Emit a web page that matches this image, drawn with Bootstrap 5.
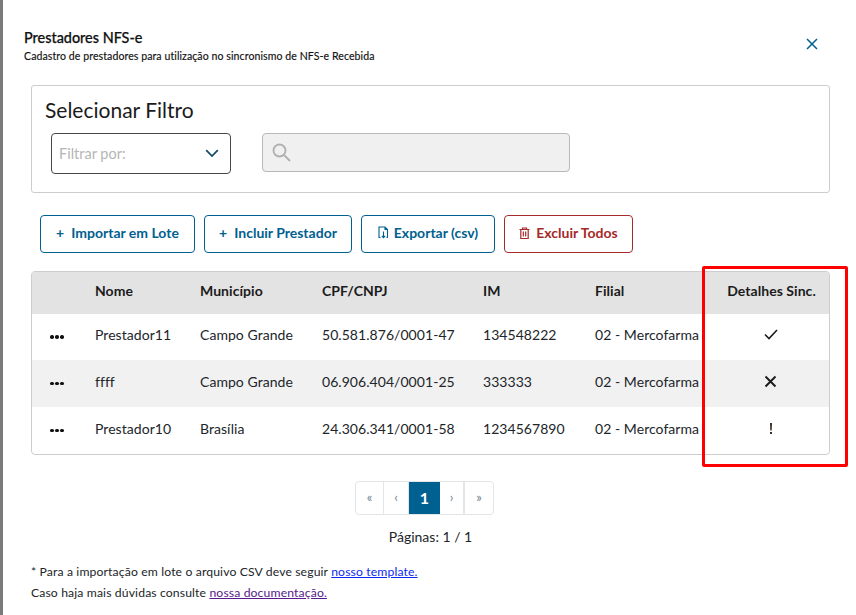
<!DOCTYPE html>
<html lang="pt-BR">
<head>
<meta charset="utf-8">
<title>Prestadores NFS-e</title>
<link href="https://cdn.jsdelivr.net/npm/bootstrap@5.3.0/dist/css/bootstrap.min.css" rel="stylesheet">
<style>
html,body{height:100%;overflow:hidden}
body{font-family:"Lato","Noto Sans",sans-serif;color:#212529;background:#fff;width:856px;height:615px;position:relative}
.side-strip{position:absolute;left:0;top:0;bottom:0;width:3px;background:#7b7b7b}
.sheet{padding:29px 26px 0 31px}
.head-row{margin-left:-7px;height:56px}
.modal-name{font-size:14.4px;font-weight:500;line-height:17px;margin:0;color:#111;-webkit-text-stroke:.25px #111}
.modal-sub{font-size:10.55px;line-height:13px;margin:4px 0 0;color:#111;letter-spacing:.08px;-webkit-text-stroke:.15px #111}
.close-x{background:none;border:0;padding:0;width:14px;height:14px;margin:9px 10px 0 0;display:flex;color:#00608f}
.filter-box{border:1px solid #cdcdcd;border-radius:3px;height:108px;padding:11px 13px 0;width:799px}
.filter-title{font-size:21px;font-weight:400;line-height:26px;margin:0 0 10px;color:#1b1b1b}
.filter-row{padding-left:6px;gap:31px}
.pick{width:180px;height:41px;border:1px solid #45494c;border-radius:4px;padding:0 11px 0 7px;font-size:14.5px;color:#b5b5b5}
.pick svg{margin-bottom:1px}
.finder{width:308px;height:39px;background:#f0f0f0;border:1px solid #b8b8b8;border-radius:4px;padding-left:9px}
.actions{gap:9px;margin:22px 0 18px 9px}
.act{height:38px;border:1px solid #00608f;border-radius:4px;background:#fff;color:#00608f;font-size:14px;font-weight:700;padding:0 0 3px;display:flex;align-items:center;justify-content:center;gap:7px;--bs-btn-hover-bg:#fff;--bs-btn-hover-color:#00608f;--bs-btn-hover-border-color:#00608f}
.act-a{width:155px}.act-b{width:148px}.act-c{width:134px;gap:5px}
.act-d{width:129px;gap:6px;border-color:#a52a2a;color:#a52a2a;--bs-btn-hover-color:#a52a2a;--bs-btn-hover-border-color:#a52a2a}
.grid-wrap{width:799px;height:184px;border:1px solid #cdcdcd;border-radius:4px;overflow:hidden}
.grid-table{margin:0;table-layout:fixed;width:100%;font-size:14px;letter-spacing:.05px;--bs-table-bg:transparent;color:#212529}
.grid-table th,.grid-table td{padding:0 0 5px;border:0;vertical-align:middle;white-space:nowrap}
.grid-table thead tr{height:42px;background:#e3e3e3}
.grid-table th{font-weight:700;color:#1b1b1b;padding-bottom:6px}
.grid-table tbody tr{height:47px}
.grid-table tbody tr:first-child{height:46px}
.grid-table tbody tr:nth-child(2){background:#f1f1f1}
.grid-table td.menu-cell{padding:0}
.dots{display:flex;gap:1.6px;padding-left:18px}
.dots i{width:3.6px;height:3.6px;border-radius:50%;background:#111;display:block}
.grid-table .mark-cell{text-align:center;padding-left:4px;padding-bottom:8px}
.grid-table th.mark-cell{padding-left:6px;padding-bottom:6px}
.grid-table td svg{display:inline-block}
.pager{margin:26px 0 0 324px;width:139px;height:34px;border:1px solid #e3e6e9;border-radius:4px;overflow:hidden;color:#75838f;font-size:13px}
.pager span{display:flex;align-items:center;justify-content:center;border-right:1px solid #e3e6e9;height:100%}
.pager .p1{width:28px}.pager .p2{width:25px}.pager .p3{width:31px;background:#00608f;color:#fff;font-size:16px;font-weight:700;border:0}.pager .p4{width:25px;border-right:2px solid #e3e6e9}.pager .p5{width:28px;border:0}
.page-count{font-size:14px;line-height:18px;margin:13px 0 0;width:799px;text-align:center}
.notes{font-size:12.2px;line-height:21px;margin:15px 0 0;letter-spacing:.13px;color:#212529}
.notes a.tpl{color:#0d2bf0}
.notes a.doc{color:#551a8b}
.alert-frame{position:absolute;left:702px;top:266px;width:146px;height:201px;border:3px solid #fe0000;border-radius:2px;pointer-events:none}
</style>
</head>
<body>
<div class="side-strip"></div>
<main class="sheet">
  <div class="head-row d-flex justify-content-between align-items-start">
    <div>
      <h1 class="modal-name">Prestadores NFS-e</h1>
      <p class="modal-sub">Cadastro de prestadores para utilização no sincronismo de NFS-e Recebida</p>
    </div>
    <button class="close-x" aria-label="Fechar"><svg width="12" height="12" viewBox="0 0 12 12" fill="none" stroke="currentColor" stroke-width="1.5"><path d="M1 1l10 10M11 1L1 11"/></svg></button>
  </div>
  <section class="filter-box">
    <h2 class="filter-title">Selecionar Filtro</h2>
    <div class="filter-row d-flex align-items-start">
      <div class="pick d-flex align-items-center justify-content-between">
        <span>Filtrar por:</span>
        <svg width="14" height="9" viewBox="0 0 14 9" fill="none" stroke="#0f4a66" stroke-width="1.7"><path d="M1.2 1.2L7 7l5.8-5.8"/></svg>
      </div>
      <div class="finder d-flex align-items-center">
        <svg width="19" height="19" viewBox="0 0 19 19" fill="none" stroke="#b1b1b1" stroke-width="1.8"><circle cx="7.5" cy="7.5" r="6"/><path d="M12 12l6 6"/></svg>
      </div>
    </div>
  </section>
  <div class="actions d-flex">
    <button class="btn act act-a"><span>+</span><span>Importar em Lote</span></button>
    <button class="btn act act-b"><span>+</span><span>Incluir Prestador</span></button>
    <button class="btn act act-c"><svg width="11" height="13" viewBox="0 0 11 13" fill="none" stroke="currentColor" stroke-width="1.1"><path d="M2.5 11.5H1V1h6l2.500 2.500v8H8.500M7 1v2.500h2.500M5.500 5.500v6M3.800 9.800l1.700 1.900 1.700-1.900"/></svg><span>Exportar (csv)</span></button>
    <button class="btn act act-d"><svg width="11" height="12" viewBox="0 0 11 12" fill="none" stroke="currentColor" stroke-width="1.2"><path d="M.5 2.500h10M3.500 2.500V1h4v1.500M1.800 2.500v9h7.400v-9M4.300 4.500v5M6.700 4.500v5"/></svg><span>Excluir Todos</span></button>
  </div>
  <div class="grid-wrap">
    <table class="table grid-table">
      <colgroup><col style="width:63px"><col style="width:105px"><col style="width:122px"><col style="width:161px"><col style="width:112px"><col style="width:113px"><col></colgroup>
      <thead><tr><th></th><th>Nome</th><th>Município</th><th>CPF/CNPJ</th><th>IM</th><th>Filial</th><th class="mark-cell">Detalhes Sinc.</th></tr></thead>
      <tbody>
        <tr><td class="menu-cell"><div class="dots"><i></i><i></i><i></i></div></td><td>Prestador11</td><td>Campo Grande</td><td>50.581.876/0001-47</td><td>134548222</td><td>02 - Mercofarma</td><td class="mark-cell"><svg width="14" height="11" viewBox="0 0 14 11" fill="none" stroke="#1b1b1b" stroke-width="1.600"><path d="M1 5.500l4 4L13 1"/></svg></td></tr>
        <tr><td class="menu-cell"><div class="dots"><i></i><i></i><i></i></div></td><td>ffff</td><td>Campo Grande</td><td>06.906.404/0001-25</td><td>333333</td><td>02 - Mercofarma</td><td class="mark-cell"><svg width="13" height="13" viewBox="0 0 13 13" fill="none" stroke="#1b1b1b" stroke-width="1.900"><path d="M1.500 1.500l10 10M11.500 1.500l-10 10"/></svg></td></tr>
        <tr><td class="menu-cell"><div class="dots"><i></i><i></i><i></i></div></td><td>Prestador10</td><td>Brasília</td><td>24.306.341/0001-58</td><td>1234567890</td><td>02 - Mercofarma</td><td class="mark-cell"><svg width="4" height="11" viewBox="0 0 4 11" fill="#3a2a20"><path d="M1 0h2l-.3 7.500H1.300zM1 9h2v2H1z"/></svg></td></tr>
      </tbody>
    </table>
  </div>
  <nav class="pager d-flex" aria-label="Paginação">
    <span class="p1">«</span><span class="p2">‹</span><span class="p3">1</span><span class="p4">›</span><span class="p5">»</span>
  </nav>
  <p class="page-count">Páginas: 1 / 1</p>
  <div class="notes">
    <div>* Para a importação em lote o arquivo CSV deve seguir <a class="tpl" href="#">nosso template.</a></div>
    <div>Caso haja mais dúvidas consulte <a class="doc" href="#">nossa documentação.</a></div>
  </div>
</main>
<div class="alert-frame"></div>
<script src="https://cdn.jsdelivr.net/npm/bootstrap@5.3.0/dist/js/bootstrap.bundle.min.js"></script>
</body>
</html>
